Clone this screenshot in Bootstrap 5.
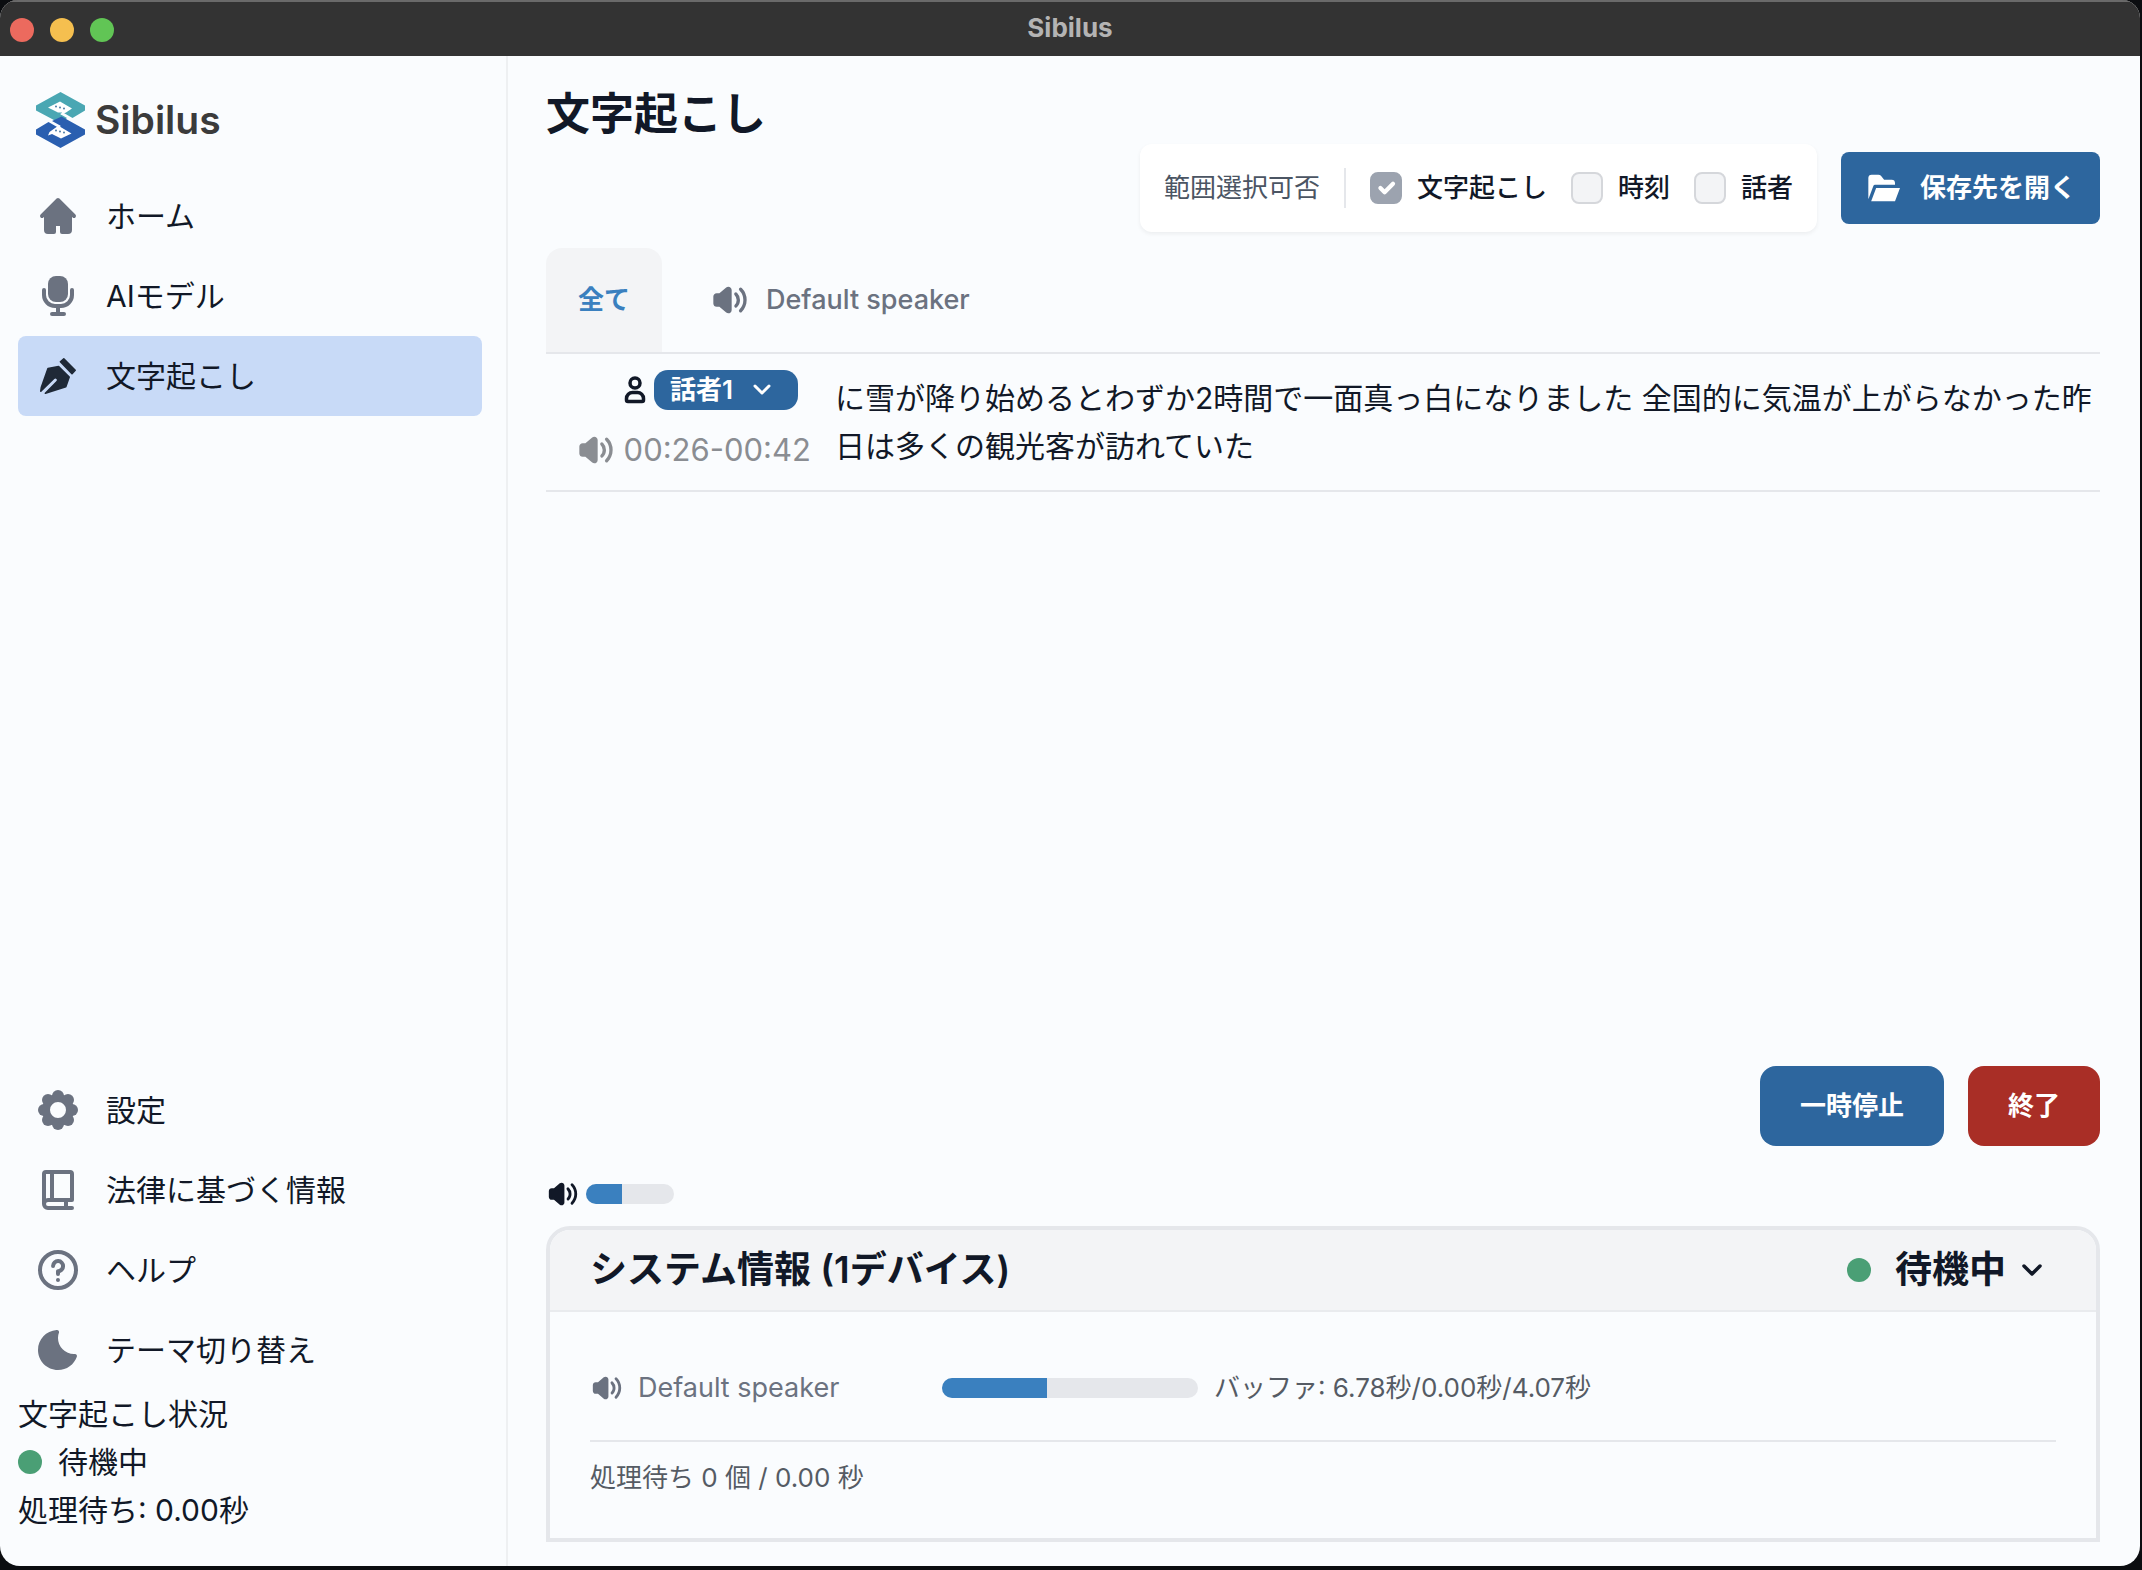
<!DOCTYPE html>
<html lang="ja">
<head>
<meta charset="utf-8">
<meta name="viewport" content="width=device-width, initial-scale=1">
<title>Sibilus</title>
<link href="https://cdn.jsdelivr.net/npm/bootstrap@5.3.0/dist/css/bootstrap.min.css" rel="stylesheet">
<style>
  :root { --ink: #111827; --muted: #6b7280; --line: #e5e7eb; --blue: #2d669e; --bar: #3a80bf; --surface: #fafcfe; }
  body { background: #0b0d10; color: var(--ink); font-family: "Inter", "Noto Sans CJK JP", sans-serif; font-size: 30px; line-height: 48px; }
  .app-window { min-height: calc(100vh - 4px); margin: 0 2px 4px 0; border-radius: 18px 18px 20px 20px; overflow: hidden; background: var(--surface); }
  .title-bar { height: 56px; padding: 0 0 2px; background: #333; border-top: 2px solid #6a6a6a; font-size: 26px; line-height: 28px; color: #b4b4b4; }
  .light { width: 24px; height: 24px; border-radius: 50%; }
  .title-side { width: 120px; gap: 16px; margin: 0 20px 0 10px; }
  .side-bar { width: 508px; padding: 32px 24px 32px 18px; border-right: 2px solid #eef0f2; }
  .brand { gap: 10px; padding-left: 18px; height: 64px; margin-bottom: 24px; font-size: 39px; font-weight: 600; color: #3b3b3b; text-decoration: none; }
  .side-link { height: 80px; padding: 0 16px; gap: 24px; border-radius: 8px; color: var(--ink); text-decoration: none; }
  .side-link svg { width: 48px; height: 48px; color: var(--muted); flex: none; }
  .side-link.active { background: #c8daf7; }
  .side-link.active svg { color: #1f2937; }
  .status-dot { width: 24px; height: 24px; border-radius: 50%; background: #4a9f75; flex: none; }
  .main-pane { padding: 24px 40px 24px 38px; min-width: 0; }
  .page-title { font-size: 44px; line-height: 60px; font-weight: 700; margin: 0; padding-top: 4px; }
  .tool-row { gap: 24px; font-size: 26px; line-height: 40px; margin-bottom: 16px; }
  .range-box { background: #fff; border-radius: 12px; padding: 24px; gap: 24px; box-shadow: 0 2px 4px rgba(0,0,0,.06); }
  .range-title { color: #4b5563; }
  .v-line { width: 2px; height: 40px; background: var(--line); }
  .check-item { gap: 15px; font-weight: 500; }
  .check-item .form-check-input { width: 32px; height: 32px; margin: 0; border: 2px solid #d5d7db; border-radius: 8px; background-color: #f3f4f6; opacity: 1; }
  .check-item .form-check-input:checked { background-color: #9ca3af; border-color: #9ca3af; }
  .btn-app { border: 0; color: #fff; font-size: 26px; line-height: 40px; font-weight: 600; background: var(--blue); }
  .btn-app:hover { color: #fff; background: #255a8d; }
  .btn-open { padding: 16px 24px; gap: 15px; border-radius: 8px; }
  .btn-round { padding: 20px 40px; border-radius: 16px; }
  .btn-stop { background: #a92e26; }
  .tab-strip { border-bottom: 2px solid var(--line); font-size: 26px; line-height: 40px; }
  .tab-link { padding: 32px; gap: 16px; border: 0; background: none; color: var(--muted); font-weight: 500; border-radius: 16px 16px 0 0; height: 104px; }
  .tab-link.active { background: #f3f4f6; color: var(--bar); font-weight: 600; }
  .device-label { font-size: 27px; }
  .talk-row { min-height: 138px; gap: 24px; border-bottom: 2px solid var(--line); }
  .talk-meta { width: 265px; gap: 20px; flex: none; padding-bottom: 4px; }
  .talk-who { gap: 8px; padding-right: 13px; }
  .speaker-pick { width: 144px; height: 40px; border: 0; border-radius: 14px; padding: 0 16px; font-size: 26px; line-height: 38px; font-weight: 600; color: #fff; background: var(--blue) url("data:image/svg+xml,%3Csvg xmlns='http://www.w3.org/2000/svg' viewBox='0 0 20 12' fill='none' stroke='white' stroke-width='3' stroke-linecap='round' stroke-linejoin='round'%3E%3Cpath d='m3 2 7 7 7-7'/%3E%3C/svg%3E") no-repeat right 26px center / 20px 12px; }
  .talk-time { color: #8a8d92; font-size: 31px; line-height: 40px; gap: 8px; }
  .level-row { height: 80px; padding-top: 16px; gap: 6px; }
  .meter { background: var(--line); border-radius: 10px; height: 20px; --bs-progress-bar-bg: var(--bar); }
  .meter-short { width: 88px; }
  .meter-long { width: 256px; flex: none; }
  .info-panel { border: 4px solid var(--line); border-radius: 24px 24px 0 0; overflow: hidden; }
  .info-head { height: 82px; padding: 0 54px 0 40px; border: 0; border-bottom: 2px solid #e9ebee; background: #f3f4f6; color: var(--ink); font-size: 37px; font-weight: 600; }
  .info-body { padding: 40px; font-size: 26px; line-height: 40px; color: #555b64; }
  .device-row { height: 72px; gap: 16px; margin-bottom: 16px; }
  .device-name { width: 336px; gap: 14px; color: var(--muted); }
  .queue-row { border-top: 2px solid var(--line); padding-top: 16px; }
</style>
</head>
<body>
<svg width="0" height="0" class="position-absolute" aria-hidden="true">
  <symbol id="speaker" viewBox="0 0 24 24" fill="currentColor">
    <path d="M13 6.037c0-1.724-1.978-2.665-3.28-1.562L5.638 7.933H4c-1.105 0-2 .91-2 2.034v4.066c0 1.123.895 2.034 2 2.034h1.638l4.082 3.458c1.302 1.104 3.28.162 3.28-1.562V6.037Z"/>
    <path d="M14.786 7.658a.988.988 0 0 1 1.414-.014A6.135 6.135 0 0 1 18 12c0 1.662-.655 3.17-1.715 4.27a.989.989 0 0 1-1.414.014 1.029 1.029 0 0 1-.014-1.437A4.085 4.085 0 0 0 16 12a4.085 4.085 0 0 0-1.2-2.904 1.029 1.029 0 0 1-.014-1.438Z"/>
    <path d="M17.657 4.811a.988.988 0 0 1 1.414 0A10.224 10.224 0 0 1 22 12c0 2.807-1.12 5.35-2.929 7.189a.988.988 0 0 1-1.414 0 1.029 1.029 0 0 1 0-1.438A8.173 8.173 0 0 0 20 12a8.173 8.173 0 0 0-2.343-5.751 1.029 1.029 0 0 1 0-1.438Z"/>
  </symbol>
</svg>

<div class="app-window d-flex flex-column">
  <header class="title-bar d-flex align-items-center justify-content-between">
    <div class="title-side d-flex pt-1">
      <span class="light" style="background:#ec6a5e"></span>
      <span class="light" style="background:#f5bf4f"></span>
      <span class="light" style="background:#61c555"></span>
    </div>
    <strong>Sibilus</strong>
    <div class="title-side"></div>
  </header>

  <div class="d-flex flex-grow-1">
    <aside class="side-bar d-flex flex-column flex-shrink-0">
      <a href="#" class="brand d-flex align-items-center">
        <svg width="49" height="56" viewBox="0 0 49 56" aria-hidden="true">
          <path fill="#4aa7b3" d="M24.500 0 49 13.500v5L36.500 26 27 20.500 24 22l7 4-6.500 5.500L0 18.500v-5Z"/>
          <path fill="#2a5fb0" d="M24.500 56 0 42.500v-5L12.500 30l9.500 5.500 3-1.500-9-5 9.500-4.500L49 37.500v5Z"/>
          <path fill="#fff" d="m24 9.500 12 7-6 4-5 2.500 1-2.500h-4l-10-5ZM25 46.500l-9-4.500-4 1.500 1.500-3.500 7-5 3-1.500 1 1.500 11 6.500Z"/>
          <g fill="#3a6f9e"><circle cx="20" cy="14.500" r=".9"/><circle cx="24" cy="15.500" r=".9"/><circle cx="28" cy="16.500" r=".9"/><circle cx="20" cy="38.500" r=".9"/><circle cx="24" cy="39.500" r=".9"/><circle cx="28" cy="40.500" r=".9"/></g>
        </svg>
        <span>Sibilus</span>
      </a>
      <nav class="d-flex flex-column">
        <a href="#" class="side-link d-flex align-items-center">
          <svg viewBox="0 0 24 24" fill="currentColor"><path d="M11.293 3.293a1 1 0 0 1 1.414 0l6 6 2 2a1 1 0 0 1-1.414 1.414L19 12.414V19a2 2 0 0 1-2 2h-3a1 1 0 0 1-1-1v-3h-2v3a1 1 0 0 1-1 1H7a2 2 0 0 1-2-2v-6.586l-.293.293a1 1 0 0 1-1.414-1.414l2-2 6-6Z"/></svg>
          ホーム</a>
        <a href="#" class="side-link d-flex align-items-center">
          <svg viewBox="0 0 24 24"><rect x="7" y="2" width="10" height="13" rx="4" fill="currentColor"/><path d="M5 9v2.500A5.500 5.500 0 0 0 10.500 17h3a5.500 5.500 0 0 0 5.500-5.500V9M12 17v4M9 21h6" fill="none" stroke="currentColor" stroke-width="2" stroke-linecap="round"/></svg>
          AIモデル</a>
        <a href="#" class="side-link active d-flex align-items-center" aria-current="page">
          <svg viewBox="0 0 24 24" fill="currentColor" stroke="currentColor" stroke-width=".8" stroke-linejoin="round"><path d="m13.200 4.900 1.700-1.500 5.700 5.700-1.600 1.700ZM12.300 7.300l5.300 5.200-1.700 4.900L5.700 20.600l5.800-5.800a1 1 0 0 0-1.600-1.600L3.400 19.600l.3-2L7 8.300Z"/></svg>
          文字起こし</a>
      </nav>
      <nav class="d-flex flex-column mt-auto">
        <a href="#" class="side-link d-flex align-items-center">
          <svg viewBox="0 0 24 24" fill="none" stroke="currentColor"><circle cx="12" cy="12" r="6" stroke-width="4"/><g fill="currentColor" stroke="none"><circle cx="12" cy="5" r="3"/><circle cx="17" cy="7" r="3"/><circle cx="19" cy="12" r="3"/><circle cx="17" cy="17" r="3"/><circle cx="12" cy="19" r="3"/><circle cx="7" cy="17" r="3"/><circle cx="5" cy="12" r="3"/><circle cx="7" cy="7" r="3"/></g></svg>
          設定</a>
        <a href="#" class="side-link d-flex align-items-center">
          <svg viewBox="0 0 24 24" fill="none" stroke="currentColor" stroke-width="2" stroke-linecap="round" stroke-linejoin="round"><path d="M5 19V4a1 1 0 0 1 1-1h12a1 1 0 0 1 1 1v13H7a2 2 0 0 0-2 2Zm0 0a2 2 0 0 0 2 2h12M9 3v14m7 0v4"/></svg>
          法律に基づく情報</a>
        <a href="#" class="side-link d-flex align-items-center">
          <svg viewBox="0 0 24 24" fill="none" stroke="currentColor" stroke-width="2" stroke-linecap="round" stroke-linejoin="round"><path d="M9.529 9.988a2.502 2.502 0 1 1 5 .191A2.441 2.441 0 0 1 12 12.582V14m-.010 3h.008M21 12a9 9 0 1 1-18 0 9 9 0 0 1 18 0Z"/></svg>
          ヘルプ</a>
        <a href="#" class="side-link d-flex align-items-center">
          <svg viewBox="0 0 24 24" fill="currentColor"><path d="M11.675 2.015a.998.998 0 0 0-.403.011C6.090 2.400 2 6.722 2 12c0 5.523 4.477 10 10 10 4.356 0 8.058-2.784 9.430-6.667a1 1 0 0 0-1.020-1.330c-.080.006-.105.005-.127.005h-.001l-.028-.002A5.227 5.227 0 0 0 20 14a8 8 0 0 1-8-8c0-1.022.192-2 .541-2.900a.996.996 0 0 0-.866-1.085Z"/></svg>
          テーマ切り替え</a>
      </nav>
      <div>文字起こし状況</div>
      <div class="d-flex align-items-center gap-3"><span class="status-dot"></span>待機中</div>
      <div>処理待ち: 0.00秒</div>
    </aside>

    <main class="main-pane flex-grow-1 d-flex flex-column">
      <h1 class="page-title">文字起こし</h1>
      <div class="tool-row d-flex align-items-center justify-content-end">
        <div class="range-box d-flex align-items-center">
          <span class="range-title">範囲選択可否</span>
          <span class="v-line"></span>
          <div class="check-item d-flex align-items-center"><input class="form-check-input" type="checkbox" id="c-text" checked><label for="c-text">文字起こし</label></div>
          <div class="check-item d-flex align-items-center"><input class="form-check-input" type="checkbox" id="c-time"><label for="c-time">時刻</label></div>
          <div class="check-item d-flex align-items-center"><input class="form-check-input" type="checkbox" id="c-who"><label for="c-who">話者</label></div>
        </div>
        <button type="button" class="btn btn-app btn-open d-flex align-items-center">
          <svg width="40" height="40" viewBox="0 0 24 24" fill="currentColor" aria-hidden="true"><path d="M4 4a2 2 0 0 0-2 2v12c0 .200.030.400.087.586l2.977-7.937A1 1 0 0 1 6 10h12V9a2 2 0 0 0-2-2h-4.532l-1.900-2.280A2 2 0 0 0 8.032 4H4Zm2.693 8L3.700 20H18l3-8H6.693Z"/></svg>
          保存先を開く</button>
      </div>

      <div class="tab-strip d-flex" role="tablist">
        <button type="button" class="tab-link active" role="tab" aria-selected="true">全て</button>
        <button type="button" class="tab-link device-label d-flex align-items-center ms-3" role="tab" aria-selected="false"><svg width="40" height="40" aria-hidden="true"><use href="#speaker"/></svg>Default speaker</button>
      </div>

      <div class="talk-row d-flex align-items-center">
        <div class="talk-meta d-flex flex-column">
          <div class="talk-who d-flex align-items-center justify-content-end">
            <svg width="22" height="28" viewBox="0 0 22 28" fill="none" stroke="currentColor" stroke-width="3.500" aria-hidden="true"><circle cx="11" cy="7" r="5"/><path d="M2.500 22.500a6 6 0 0 1 6-6h5a6 6 0 0 1 6 6V24a1.500 1.500 0 0 1-1.500 1.500H4A1.500 1.500 0 0 1 2.500 24Z"/></svg>
            <select class="speaker-pick form-select" aria-label="話者"><option>話者1</option></select>
          </div>
          <div class="talk-time d-flex align-items-center justify-content-end"><svg width="40" height="40" aria-hidden="true"><use href="#speaker"/></svg><span>00:26-00:42</span></div>
        </div>
        <p class="mb-0">に雪が降り始めるとわずか2時間で一面真っ白になりました 全国的に気温が上がらなかった昨日は多くの観光客が訪れていた</p>
      </div>

      <div class="d-flex justify-content-end gap-4 mt-auto">
        <button type="button" class="btn btn-app btn-round">一時停止</button>
        <button type="button" class="btn btn-app btn-round btn-stop">終了</button>
      </div>

      <div class="level-row d-flex align-items-center">
        <svg width="34" height="34" aria-hidden="true"><use href="#speaker"/></svg>
        <div class="progress meter meter-short" role="progressbar" aria-valuenow="41" aria-valuemin="0" aria-valuemax="100"><div class="progress-bar" style="width:41%"></div></div>
      </div>

      <section class="info-panel">
        <button type="button" class="info-head d-flex align-items-center w-100" aria-expanded="true">
          <span class="me-auto">システム情報 (1デバイス)</span>
          <span class="status-dot me-4"></span>
          <span class="me-3">待機中</span>
          <svg width="20" height="14" viewBox="0 0 20 14" fill="none" stroke="currentColor" stroke-width="3.500" stroke-linecap="round" stroke-linejoin="round" aria-hidden="true"><path d="m2 3 8 8 8-8"/></svg>
        </button>
        <div class="info-body">
          <div class="device-row d-flex align-items-center">
            <div class="device-name device-label d-flex align-items-center"><svg width="34" height="34" aria-hidden="true"><use href="#speaker"/></svg>Default speaker</div>
            <div class="progress meter meter-long" role="progressbar" aria-valuenow="41" aria-valuemin="0" aria-valuemax="100"><div class="progress-bar" style="width:41%"></div></div>
            <span>バッファ: 6.78秒/0.00秒/4.07秒</span>
          </div>
          <div class="queue-row">処理待ち 0 個 / 0.00 秒</div>
        </div>
      </section>
    </main>
  </div>
</div>
<script src="https://cdn.jsdelivr.net/npm/bootstrap@5.3.0/dist/js/bootstrap.bundle.min.js"></script>
</body>
</html>
